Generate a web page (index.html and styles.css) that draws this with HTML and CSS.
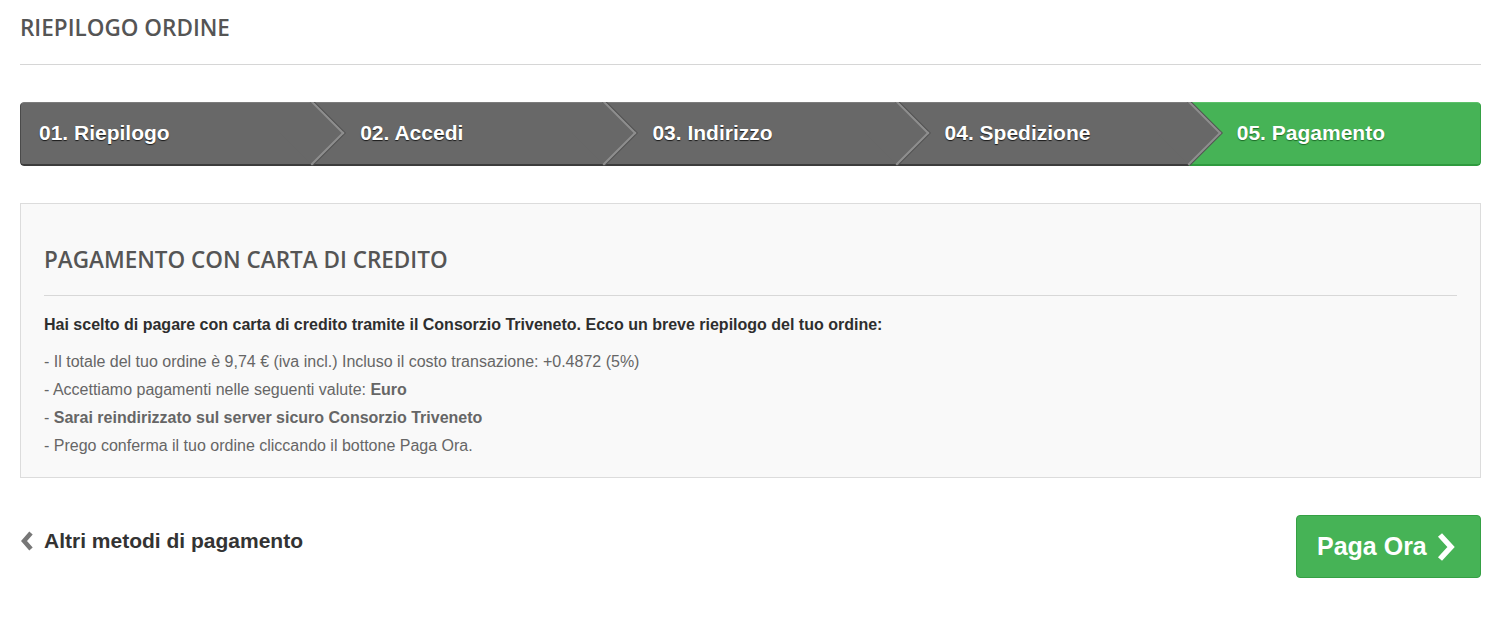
FILE: index.html
```html
<!DOCTYPE html>
<html lang="it">
<head>
    <meta charset="UTF-8">
    <meta name="viewport" content="width=device-width, initial-scale=1.0">
    <title>Riepilogo ordine</title>
    <link rel="stylesheet" href="styles.css">
</head>
<body>
    <div class="container">
        <h1 class="page-title">RIEPILOGO ORDINE</h1>

        <ul class="steps">
            <li class="step"><span>01. Riepilogo</span></li>
            <li class="step"><span>02. Accedi</span></li>
            <li class="step"><span>03. Indirizzo</span></li>
            <li class="step"><span>04. Spedizione</span></li>
            <li class="step current"><span>05. Pagamento</span></li>
        </ul>

        <div class="payment-box">
            <h2>PAGAMENTO CON CARTA DI CREDITO</h2>
            <p class="intro">Hai scelto di pagare con carta di credito tramite il Consorzio Triveneto. Ecco un breve riepilogo del tuo ordine:</p>
            <ul class="summary">
                <li>- Il totale del tuo ordine è 9,74 € (iva incl.) Incluso il costo transazione: +0.4872 (5%)</li>
                <li>- Accettiamo pagamenti nelle seguenti valute: <b>Euro</b></li>
                <li>- <b>Sarai reindirizzato sul server sicuro Consorzio Triveneto</b></li>
                <li>- Prego conferma il tuo ordine cliccando il bottone Paga Ora.</li>
            </ul>
        </div>

        <div class="actions">
            <a href="#" class="back-link">
                <svg width="14" height="22" viewBox="0 0 14 22"><path d="M11 3 L4 11 L11 19" fill="none" stroke="#777" stroke-width="4.5"/></svg>
                Altri metodi di pagamento
            </a>
            <button class="pay-button">
                Paga Ora
                <svg width="22" height="30" viewBox="0 0 22 30"><path d="M5 3 L16 15 L5 27" fill="none" stroke="#fff" stroke-width="5.5"/></svg>
            </button>
        </div>
    </div>
</body>
</html>
```

FILE: styles.css
```css
body {
    margin: 0;
    background-color: #fff;
    color: #333;
    font-family: "Liberation Sans", Arial, sans-serif;
}

.container {
    padding: 0 23px 0 20px;
}

.page-title {
    margin: 0;
    padding: 13px 0 21px;
    font-family: "Open Sans", sans-serif;
    font-size: 22.5px;
    font-weight: 600;
    color: #555;
    border-bottom: 1px solid #d6d6d6;
    line-height: 30px;
}

.steps {
    display: flex;
    list-style: none;
    margin: 37px 0 0;
    padding: 0;
    height: 64px;
    border-radius: 4px;
    overflow: hidden;
}

.step {
    position: relative;
    flex: 0 0 20%;
    display: flex;
    align-items: center;
    padding-left: 48px;
    background-color: #686868;
    border-top: 1px solid #7c7c7c;
    border-bottom: 2px solid #3c3c3c;
    box-sizing: border-box;
    color: #fff;
    font-size: 21px;
    font-weight: bold;
    text-shadow: 0 1px 1px #1a1a1a;
}

.step:first-child {
    padding-left: 18px;
    border-left: 1px solid #4a4a4a;
    border-radius: 4px 0 0 4px;
}

.step:nth-child(1) { z-index: 5; }
.step:nth-child(2) { z-index: 4; }
.step:nth-child(3) { z-index: 3; }
.step:nth-child(4) { z-index: 2; }
.step:nth-child(5) { z-index: 1; }

.step span {
    position: relative;
    z-index: 2;
    margin-top: -2px;
}

.step::after {
    content: "";
    position: absolute;
    top: 7px;
    right: -23px;
    width: 44px;
    height: 44px;
    background-color: #686868;
    border-top: 2px solid #8e8e8e;
    border-right: 2px solid #8e8e8e;
    box-shadow: 1px -1px 0 #4f4f4f;
    transform: rotate(45deg);
}

.step.current {
    background-color: #46b356;
    border-top-color: #5cc16a;
    border-bottom-color: #2f9a3e;
    border-right: 1px solid #35a044;
    border-radius: 0 4px 4px 0;
    text-shadow: 0 1px 1px #1d6a28;
}

.step.current::after {
    display: none;
}

.payment-box {
    margin-top: 37px;
    padding: 30px 23px 17px 23px;
    background-color: #f9f9f9;
    border: 1px solid #dcdcdc;
}

.payment-box h2 {
    margin: 10px 0 0;
    padding-bottom: 19px;
    font-family: "Open Sans", sans-serif;
    font-size: 22.5px;
    font-weight: 600;
    color: #555;
    border-bottom: 1px solid #d8d8d8;
    line-height: 32px;
}

.intro {
    margin: 20px 0 14px;
    font-size: 16px;
    line-height: 18px;
    font-weight: bold;
    color: #2e2e2e;
}

.summary {
    list-style: none;
    margin: 0;
    padding: 0;
    font-size: 16px;
    color: #666;
    line-height: 28px;
}

.actions {
    display: flex;
    justify-content: space-between;
    align-items: center;
    margin-top: 37px;
}

.back-link {
    display: flex;
    align-items: center;
    gap: 10px;
    margin-top: -12px;
    color: #333;
    font-size: 21px;
    font-weight: bold;
    text-decoration: none;
}

.pay-button {
    display: flex;
    align-items: center;
    gap: 8px;
    width: 185px;
    height: 63px;
    padding: 0 0 0 20px;
    background-color: #46b356;
    border: 1px solid #35a044;
    border-radius: 4px;
    color: #fff;
    font-family: "Liberation Sans", Arial, sans-serif;
    font-size: 25px;
    font-weight: bold;
    cursor: pointer;
}
```
